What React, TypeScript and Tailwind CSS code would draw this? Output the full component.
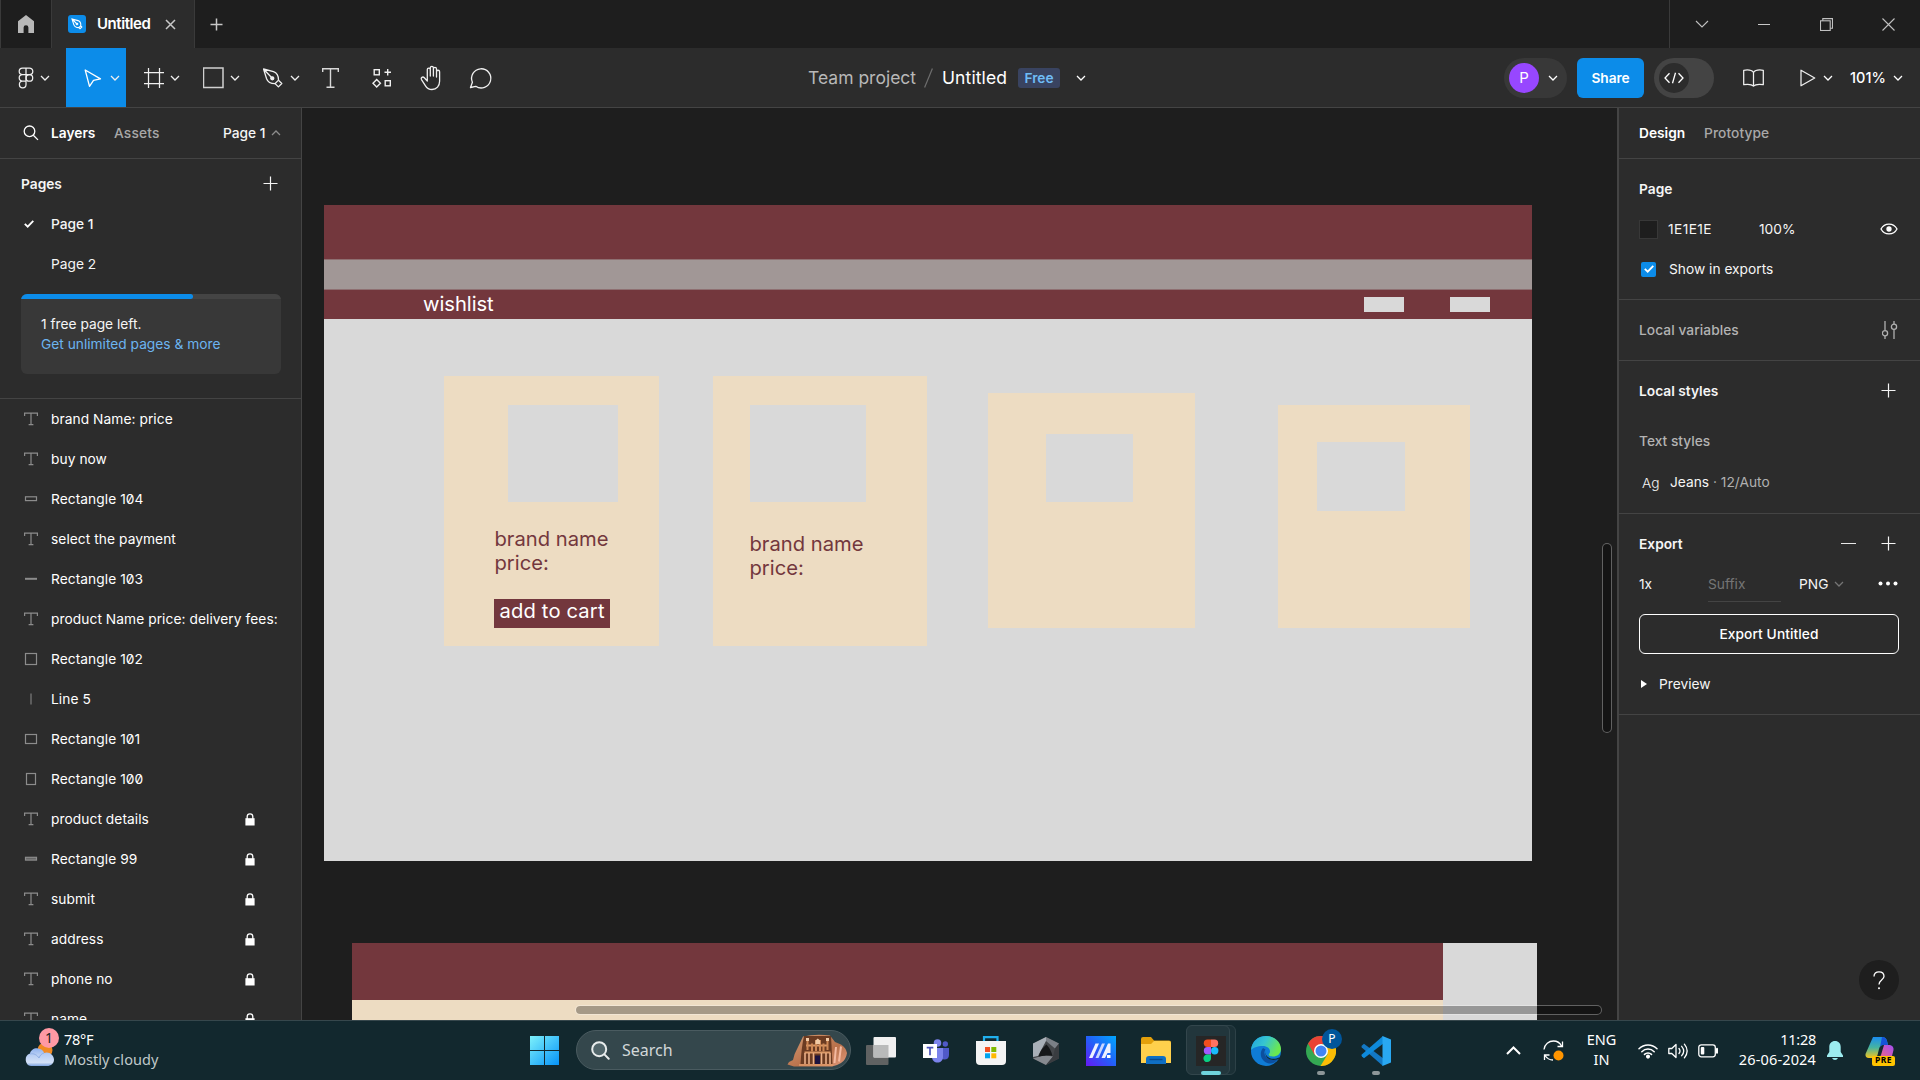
import type { ReactNode } from "react";

type LayerKind = "text" | "thin" | "dash" | "bar" | "rect" | "square" | "line" | "portrait";

const LAYERS: { name: string; kind: LayerKind; locked?: boolean }[] = [
  { name: "brand Name: price", kind: "text" },
  { name: "buy now", kind: "text" },
  { name: "Rectangle 104", kind: "thin" },
  { name: "select the payment", kind: "text" },
  { name: "Rectangle 103", kind: "dash" },
  { name: "product Name price: delivery fees:", kind: "text" },
  { name: "Rectangle 102", kind: "square" },
  { name: "Line 5", kind: "line" },
  { name: "Rectangle 101", kind: "rect" },
  { name: "Rectangle 100", kind: "portrait" },
  { name: "product details", kind: "text", locked: true },
  { name: "Rectangle 99", kind: "bar", locked: true },
  { name: "submit", kind: "text", locked: true },
  { name: "address", kind: "text", locked: true },
  { name: "phone no", kind: "text", locked: true },
  { name: "name", kind: "text", locked: true },
];

function Chevron({ className = "" }: { className?: string }) {
  return (
    <svg width="10" height="6" viewBox="0 0 10 6" className={"shrink-0 " + className} fill="none" stroke="currentColor" strokeWidth="1.25">
      <path d="M1 1l4 4 4-4" />
    </svg>
  );
}

function Plus() {
  return (
    <svg width="15" height="15" viewBox="0 0 15 15" className="-mt-px" fill="none" stroke="currentColor" strokeWidth="1.2">
      <path d="M7.5 0.5v14M0.5 7.5h14" />
    </svg>
  );
}

function LayerIcon({ kind }: { kind: LayerKind }) {
  return (
    <svg width="16" height="16" viewBox="0 0 16 16" fill="none" stroke="#8c8c8c" strokeWidth="1.2" className="shrink-0">
      {kind === "text" && <path d="M1.6 5V2.1h12.8V5M8 2.1v11.6M5.6 13.6h4.8" />}
      {kind === "thin" && <rect x="2.5" y="5.8" width="11" height="3.8" />}
      {kind === "dash" && <path d="M2 7.8h12" strokeWidth="2" />}
      {kind === "bar" && <rect x="2.5" y="6.3" width="11" height="2.8" fill="#666" />}
      {kind === "rect" && <rect x="2.5" y="3.5" width="11" height="9" />}
      {kind === "square" && <rect x="2.5" y="2.5" width="11" height="11" />}
      {kind === "portrait" && <rect x="3.5" y="2.5" width="9" height="11" />}
      {kind === "line" && <path d="M8 2.5v11" strokeWidth="1" />}
    </svg>
  );
}

function Lock() {
  return (
    <svg width="10" height="13" viewBox="0 0 10 13">
      <path d="M2.2 6V3.6a2.8 2.8 0 0 1 5.6 0V6" fill="none" stroke="#fff" strokeWidth="1.3" />
      <rect x="0.4" y="5.2" width="9.2" height="7.3" fill="#fff" />
    </svg>
  );
}

function TitleBar() {
  return (
    <div className="flex h-12 shrink-0 border-l border-[#3a3a3a] bg-[#1e1e1e]">
      <div className="flex w-[51px] items-center justify-center border-r border-[#3a3a3a]">
        <svg width="16" height="18" viewBox="0 0 16 18" fill="#b8b8b8">
          <path d="M8 0l8 6.2V18h-5.6v-5.4a2.4 2.4 0 0 0-4.8 0V18H0V6.2z" />
        </svg>
      </div>
      <div className="flex w-[143px] items-center border-r border-[#3a3a3a] bg-[#2c2c2c] pl-4">
        <div className="flex size-[18px] items-center justify-center rounded-[3px] bg-[#0c8ce9]">
          <svg width="12" height="12" viewBox="0 0 12 12" fill="none" stroke="#fff" strokeWidth="1.1">
            <path d="M1 1l6 1.6c2 .8 3 2.6 2.8 5L8 9.6c-2.6.1-4.4-1-5.2-3zM1 1l4.6 4.6M9.2 7.4l1.6 1.6-1.8 1.8-1.6-1.6" />
            <circle cx="6" cy="6" r=".8" />
          </svg>
        </div>
        <span className="ml-[11px] w-[68px] text-[15px] font-semibold tracking-[-0.45px] text-white">Untitled</span>
        <svg width="11" height="11" viewBox="0 0 11 11" stroke="#c8c8c8" strokeWidth="1.5">
          <path d="M1 1l9 9M10 1l-9 9" />
        </svg>
      </div>
      <div className="flex w-[43px] items-center justify-center text-[#c8c8c8]">
        <svg width="13" height="13" viewBox="0 0 13 13" stroke="currentColor" strokeWidth="1.5">
          <path d="M6.5.5v12M.5 6.5h12" />
        </svg>
      </div>
      <div className="ml-auto flex w-[251px] border-l border-[#3a3a3a] text-[#c0c0c0]">
        <div className="flex w-[63px] items-center justify-center">
          <svg width="14" height="8" viewBox="0 0 14 8" fill="none" stroke="currentColor" strokeWidth="1.1">
            <path d="M1 1l6 6 6-6" />
          </svg>
        </div>
        <div className="flex w-[62px] items-center justify-center">
          <div className="h-px w-3 bg-[#c8c8c8]" />
        </div>
        <div className="flex w-[63px] items-center justify-center">
          <svg width="13" height="13" viewBox="0 0 13 13" fill="none" stroke="currentColor" strokeWidth="1.1">
            <rect x=".5" y="2.8" width="9.7" height="9.7" />
            <path d="M2.8 2.8V.6h9.7v9.7h-2.3" />
          </svg>
        </div>
        <div className="flex w-[61px] items-center justify-center">
          <svg width="13" height="13" viewBox="0 0 13 13" stroke="currentColor" strokeWidth="1.1">
            <path d="M.5.5l12 12M12.5.5l-12 12" />
          </svg>
        </div>
      </div>
    </div>
  );
}

function Tool({ children, active, arrow }: { children: ReactNode; active?: boolean; arrow?: boolean }) {
  return (
    <div className={(active ? "bg-[#0c8ce9] " : "") + (arrow ? "w-[60px] justify-end pr-1.5 " : "w-[50px] justify-center ") + "flex items-center"}>
      {children}
      {arrow && <Chevron className="ml-[5px]" />}
    </div>
  );
}

function Toolbar() {
  return (
    <div className="flex h-[60px] shrink-0 items-stretch border-b border-[#444] bg-[#2c2c2c] text-white">
      <div className="flex w-[605px] text-[#f0f0f0]">
        <div className="flex w-[66px] items-center pl-[18px]">
          <svg width="16" height="22" viewBox="0 0 16 22" fill="none" stroke="currentColor" strokeWidth="1.25">
            <path d="M8 1H4.5a3.3 3.3 0 0 0 0 6.6H8zM8 1h3.5a3.3 3.3 0 0 1 0 6.6H8M8 7.6H4.5a3.3 3.3 0 0 0 0 6.6H8zM8 14.2H4.5A3.3 3.3 0 1 0 8 17.5z" />
            <circle cx="11.4" cy="10.9" r="3.3" />
          </svg>
          <Chevron className="ml-[6px]" />
        </div>
        <Tool active arrow>
          <svg width="21" height="22" viewBox="1.5 0 21 22" fill="none" stroke="#fff" strokeWidth="1.3" strokeLinejoin="round">
            <path d="M2 3l4.3 16.3 4-5.9 7-1.5z" transform="translate(.7 0)" />
          </svg>
        </Tool>
        <Tool arrow>
          <svg width="22" height="22" viewBox="0 0 22 22" fill="none" stroke="currentColor" strokeWidth="1.25">
            <path d="M5.5 1v20M16.5 1v20M1 5.5h20M1 16.5h20" />
          </svg>
        </Tool>
        <Tool arrow>
          <svg width="22" height="22" viewBox="0.5 0 22 22" fill="none" stroke="#d0d0d0" strokeWidth="1.5">
            <rect x="1" y="1" width="19.5" height="19.5" />
          </svg>
        </Tool>
        <Tool arrow>
          <svg width="22" height="22" viewBox="1 0 22 22" fill="none" stroke="currentColor" strokeWidth="1.3" strokeLinejoin="round">
            <path d="M1.5 2l10 2.7c3 1 5 4.2 5 8.4l-3.6 3.6c-4.2 0-7.2-1.9-8.3-5zM1.7 2.2l8.1 8.6" />
            <path d="M16.5 13.3l3.3 3.2-3.4 3.4-3.3-3.3" />
            <circle cx="10.3" cy="11.3" r="1.5" fill="currentColor" />
          </svg>
        </Tool>
        <Tool>
          <svg width="18" height="22" viewBox="0.5 0 18 22" fill="none" stroke="#d8d8d8" strokeWidth="1.4">
            <path d="M1.2 5V1.7h15.6V5M9 1.7v18.6M5 20.3h8" />
          </svg>
        </Tool>
        <Tool>
          <svg width="20" height="20" viewBox="-1 0 20 20" fill="none" stroke="currentColor" strokeWidth="1.4">
            <rect x="2.2" y="1.7" width="5.1" height="5.1" />
            <rect x="13.2" y="12.7" width="5.1" height="5.1" />
            <path d="M15.7 1v6.5M12.5 4.2H19M4.7 11.5l3.7 3.7-3.7 3.7L1 15.2z" />
          </svg>
        </Tool>
        <Tool>
          <svg width="24" height="26" viewBox="0.5 0 24 26" fill="none" stroke="currentColor" strokeWidth="1.3" strokeLinecap="round" strokeLinejoin="round">
            <path d="M7.3 13V4.6c0-2.1 3-2.1 3 0V11 3c0-2.2 3.1-2.2 3.1 0v8V3.9c0-2.1 3.1-2.1 3.1 0V12 6.8c0-2.1 3.1-2.1 3.1 0v9.5c0 4.7-3 8.2-7.6 8.2-3.2 0-5-1.2-6.5-3.7l-4-6.2c-1.1-1.9 1.3-3.5 2.8-1.9l3 3.3V12" transform="translate(1.5 0)" />
          </svg>
        </Tool>
        <Tool>
          <svg width="24" height="24" viewBox="0 0 24 24" fill="none" stroke="currentColor" strokeWidth="1.3" strokeLinejoin="round">
            <path d="M1.5 21.5l1.9-5.3A9.6 9.6 0 1 1 6.8 20.3z" />
          </svg>
        </Tool>
      </div>

      <div className="flex flex-1 items-center pl-[203px] text-[17.5px]">
        <span className="w-[116px] text-[#b8b8b8]">Team project</span>
        <svg width="9" height="20" viewBox="0 0 9 20" stroke="#6e6e6e" strokeWidth="1.2">
          <path d="M.6 19.5L8.4.5" />
        </svg>
        <span className="ml-[9px] w-[76px] tracking-[0.1px]">Untitled</span>
        <span className="flex h-5 w-[42px] items-center justify-center rounded-[3px] bg-[#394360] text-[13.75px] font-semibold text-[#6fbcf5]">Free</span>
        <Chevron className="ml-4" />
      </div>

      <div className="flex w-[416px] items-center">
        <div className="flex h-10 w-[63px] items-center rounded-full bg-[#383838] pl-[5px]">
          <span className="flex size-[30px] items-center justify-center rounded-full bg-[#9747ff] text-[15px]">P</span>
          <Chevron className="ml-[9px]" />
        </div>
        <div className="ml-2.5 flex h-10 w-[67px] items-center justify-center rounded-md bg-[#0c8ce9] text-[13.75px] font-semibold tracking-[-0.1px]">Share</div>
        <div className="ml-2.5 flex h-10 w-[60px] items-center rounded-full bg-[#444] pl-[5px]">
          <span className="flex size-[30px] items-center justify-center rounded-full bg-[#2c2c2c]">
            <svg width="20" height="12" viewBox="0 0 20 12" fill="none" stroke="#fff" strokeWidth="1.3">
              <path d="M5.5 1.2L1 6l4.5 4.8M14.5 1.2L19 6l-4.5 4.8M11.5.8l-3 10.4" />
            </svg>
          </span>
        </div>
        <svg className="ml-[29px] shrink-0" width="21" height="18" viewBox="0 0 21 18" fill="none" stroke="#f0f0f0" strokeWidth="1.25" strokeLinejoin="round">
          <path d="M10.5 3.5C9 1.3 5 .6 .7 1.3v14.4c4.3-.6 8.3-.2 9.8 1.5 1.5-1.7 5.5-2.1 9.8-1.5V1.3C16 .6 12 1.3 10.5 3.5zM10.5 3.5v13.7" />
        </svg>
        <svg className="ml-9 shrink-0" width="16" height="18" viewBox="0 0 16 18" fill="none" stroke="#f0f0f0" strokeWidth="1.25" strokeLinejoin="round">
          <path d="M1 1.2l13.7 7.8L1 16.8z" />
        </svg>
        <Chevron className="ml-[7px]" />
        <span className="ml-[17px] w-[43px] text-[14.5px] font-medium">101%</span>
        <Chevron />
      </div>
    </div>
  );
}

function LeftPanel() {
  return (
    <div className="flex w-[302px] shrink-0 flex-col overflow-hidden border-r border-[#444] bg-[#2c2c2c]">
      <div className="flex h-[51px] shrink-0 items-center border-b border-[#444] pl-[23px]">
        <svg width="16" height="16" viewBox="0 0 16 16" fill="none" stroke="#fff" strokeWidth="1.3">
          <circle cx="6.5" cy="6.3" r="5.3" />
          <path d="M10.3 10.2l4.7 4.7" />
        </svg>
        <span className="ml-3 w-[63px] font-semibold text-white">Layers</span>
        <span className="w-[109px] font-medium tracking-[0.15px] text-[#a8a8a8]">Assets</span>
        <span className="w-[48px] font-medium">Page 1</span>
        <Chevron className="rotate-180 text-[#8c8c8c]" />
      </div>
      <div className="flex h-[240px] shrink-0 flex-col border-b border-[#444] pt-[5px]">
        <div className="flex h-10 items-center justify-between pl-[21px] pr-[23px] font-semibold">
          Pages
          <Plus />
        </div>
        <div className="flex h-10 items-center pl-6 font-medium">
          <svg width="10" height="8" viewBox="0 0 10 8" fill="none" stroke="#fff" strokeWidth="1.8">
            <path d="M.8 3.8l2.9 2.9L9.3.9" />
          </svg>
          <span className="ml-[17px]">Page 1</span>
        </div>
        <div className="flex h-10 items-center pl-[51px]">Page 2</div>
        <div className="ml-[21px] mt-[10px] flex h-20 w-[260px] flex-col overflow-hidden rounded-md bg-[#383838]">
          <div className="h-[5px] bg-[#444]">
            <div className="h-full w-[172px] rounded-r-sm bg-[#0c8ce9]" />
          </div>
          <div className="px-5 pt-[15px] leading-5">
            <div>1 free page left.</div>
            <div className="text-[#6cb4f0]">Get unlimited pages &amp; more</div>
          </div>
        </div>
      </div>
      {LAYERS.map((l) => (
        <div key={l.name} className="flex h-10 shrink-0 items-center pl-[23px] pr-[46px]">
          <LayerIcon kind={l.kind} />
          <span className="ml-3 flex-1 whitespace-nowrap tracking-[0.06px] text-white [font-feature-settings:'zero']">{l.name}</span>
          {l.locked && <Lock />}
        </div>
      ))}
    </div>
  );
}

function RightPanel() {
  return (
    <div className="flex w-[303px] shrink-0 flex-col border-l-2 border-[#444] bg-[#2c2c2c]">
      <div className="flex h-[51px] items-center border-b border-[#444] pl-5">
        <span className="w-[65px] font-semibold text-white">Design</span>
        <span className="font-medium tracking-[0.08px] text-[#a8a8a8]">Prototype</span>
      </div>
      <div className="flex h-[141px] flex-col border-b border-[#444] pl-5 pr-[21px] pt-2.5">
        <div className="flex h-10 items-center font-semibold">Page</div>
        <div className="flex h-10 items-center">
          <span className="size-[19px] border border-[#383838] bg-[#1e1e1e]" />
          <span className="ml-[10px] w-[91px] tracking-[0.4px]">1E1E1E</span>
          <span className="w-[121px]">100%</span>
          <svg width="18" height="12" viewBox="0 0 18 12" fill="none" stroke="#fff" strokeWidth="1.3">
            <path d="M1 6c1.7-3.2 4.5-4.9 8-4.9S15.3 2.8 17 6c-1.7 3.2-4.5 4.9-8 4.9S2.7 9.2 1 6z" />
            <circle cx="9" cy="6" r="2" fill="#fff" />
          </svg>
        </div>
        <div className="flex h-10 items-center">
          <span className="ml-0.5 flex size-[15px] items-center justify-center rounded-[2px] bg-[#0c8ce9]">
            <svg width="10" height="8" viewBox="0 0 10 8" fill="none" stroke="#fff" strokeWidth="1.8">
              <path d="M.8 3.8l2.9 2.9L9.3.9" />
            </svg>
          </span>
          <span className="ml-[13px]">Show in exports</span>
        </div>
      </div>
      <div className="flex h-[61px] items-center justify-between border-b border-[#444] pl-5 pr-[22px] font-medium tracking-[0.06px] text-[#b3b3b3]">
        Local variables
        <svg width="16" height="18" viewBox="0 0 16 18" fill="none" stroke="#b0b0b0" strokeWidth="1.3">
          <path d="M3 0v9.5M3 15v3M12 0v3M12 8.5V18" />
          <circle cx="3" cy="12.2" r="2.6" />
          <circle cx="12" cy="5.8" r="2.6" />
        </svg>
      </div>
      <div className="flex h-[153px] flex-col border-b border-[#444] pl-5 pr-6 pt-2.5">
        <div className="flex h-10 items-center justify-between font-semibold">
          Local styles
          <Plus />
        </div>
        <div className="mt-2.5 flex h-10 items-center font-medium text-[#b3b3b3]">Text styles</div>
        <div className="mt-px flex h-10 items-center">
          <span className="ml-[3px] w-7 pt-px font-light">Ag</span>
          <span>
            Jeans <span className="text-[#b0b0b0]">· 12/Auto</span>
          </span>
        </div>
      </div>
      <div className="flex h-[201px] flex-col border-b border-[#444] px-5 pt-2.5">
        <div className="flex h-10 items-center pr-1 font-semibold">
          <span className="flex-1">Export</span>
          <span className="-mt-px mr-[25px] h-px w-[15px] bg-[#e8e8e8]" />
          <Plus />
        </div>
        <div className="flex h-10 items-center">
          <span className="w-[69px]">1x</span>
          <span className="flex h-9 w-[73px] items-center border-b border-[#444] text-[#757575]">Suffix</span>
          <span className="ml-[18px] w-[35px]">PNG</span>
          <Chevron className="text-[#757575]" />
          <svg className="-mt-px ml-[34px]" width="20" height="5" viewBox="0 0 20 5" fill="#fff">
            <circle cx="2.5" cy="2.5" r="2" />
            <circle cx="10" cy="2.5" r="2" />
            <circle cx="17.5" cy="2.5" r="2" />
          </svg>
        </div>
        <div className="mt-2.5 flex h-10 w-[260px] items-center justify-center rounded-md border border-white font-medium tracking-[0.08px] text-white">Export Untitled</div>
        <div className="mt-2.5 flex h-10 items-center">
          <svg className="ml-0.5" width="6" height="8" viewBox="0 0 6 8" fill="#fff">
            <path d="M0 0l6 4-6 4z" />
          </svg>
          <span className="ml-3">Preview</span>
        </div>
      </div>
      <div className="flex flex-1 items-end justify-end pb-5 pr-[21px]">
        <div className="flex size-10 items-center justify-center rounded-full bg-[#1e1e1e]">
          <svg width="12" height="19" viewBox="0 0 12 19" fill="none" stroke="#fff" strokeWidth="1.3">
            <path d="M1 5.5C1 2.5 3 .8 6 .8s5 1.7 5 4.5C11 9 6 9.3 6 13.5" />
            <circle cx="6" cy="17.3" r=".4" fill="#fff" />
          </svg>
        </div>
      </div>
    </div>
  );
}

/* Artboards sit at free positions on the canvas, relative to its top-left corner. */
function Canvas() {
  return (
    <div className="relative flex-1 overflow-hidden bg-[#1e1e1e] text-[20.2px] leading-6 text-[#73373d]">
      <div className="absolute left-[22px] top-[97px] h-[656px] w-[1208px] bg-[#d9d9d9]">
        <div className="h-[54px] bg-[#73373d]" />
        <div className="h-[31px] border-y border-[#8e6f71] bg-[#a19796]" />
        <div className="h-[29px] bg-[#73373d]" />
      </div>
      <span className="absolute left-[121px] top-[184px] tracking-[-0.05px] text-white">wishlist</span>
      <div className="absolute left-[1062px] top-[189px] h-[15px] w-10 bg-[#d9d9d9]" />
      <div className="absolute left-[1148px] top-[189px] h-[15px] w-10 bg-[#d9d9d9]" />

      <div className="absolute left-[142px] top-[268px] h-[270px] w-[215px] bg-[#eddcc2]" />
      <div className="absolute left-[206px] top-[297px] h-[97px] w-[110px] bg-[#d9d9d9]" />
      <div className="absolute left-[192.5px] top-[419px]">
        brand name
        <br />
        price:
      </div>
      <div className="absolute left-[192px] top-[491px] h-[29px] w-[116px] bg-[#73373d] pl-[5.5px] tracking-[0.15px] text-white">add to cart</div>

      <div className="absolute left-[411px] top-[268px] h-[270px] w-[214px] bg-[#eddcc2]" />
      <div className="absolute left-[448px] top-[297px] h-[97px] w-[116px] bg-[#d9d9d9]" />
      <div className="absolute left-[447.5px] top-[424px]">
        brand name
        <br />
        price:
      </div>

      <div className="absolute left-[686px] top-[285px] h-[235px] w-[207px] bg-[#eddcc2]" />
      <div className="absolute left-[744px] top-[326px] h-[68px] w-[87px] bg-[#d9d9d9]" />

      <div className="absolute left-[976px] top-[297px] h-[223px] w-[192px] bg-[#eddcc2]" />
      <div className="absolute left-[1015px] top-[334px] h-[69px] w-[88px] bg-[#d9d9d9]" />

      <div className="absolute left-[50px] top-[835px] h-[77px] w-[1185px] bg-[#d9d9d9]">
        <div className="h-[57px] w-[1091px] bg-[#73373d]" />
        <div className="h-5 w-[1091px] bg-[#eddcc2]" />
      </div>

      <div className="absolute left-[1300px] top-[435px] h-[190px] w-[10px] rounded-full border border-white/30 bg-black/30 bg-clip-padding" />
      <div className="absolute left-[273px] top-[897px] h-[10px] w-[1027px] rounded-full border border-white/30 bg-black/30 bg-clip-padding" />
    </div>
  );
}

function TaskApp({ children }: { children: ReactNode }) {
  return <div className="relative flex h-full w-[55px] shrink-0 items-center justify-center">{children}</div>;
}

function RunDot() {
  return <span className="absolute bottom-[5px] left-1/2 h-1 w-2 -translate-x-1/2 rounded-full bg-[#8d9698]" />;
}

function Taskbar() {
  return (
    <div className="flex h-[60px] shrink-0 items-center border-t border-[#36474c] bg-[#12282e] font-['Noto_Sans',sans-serif] text-[14.5px] text-white">
      <div className="flex w-[530px] items-center pl-[23px]">
        <div className="relative h-[38px] w-8">
          <svg width="32" height="38" viewBox="0 0 32 38" className="-mt-px">
            <defs>
              <linearGradient id="cloud" x1="0" y1="0" x2="0" y2="1">
                <stop offset="0" stopColor="#8fb2ee" />
                <stop offset=".35" stopColor="#b6cdf4" />
                <stop offset=".8" stopColor="#d3e1f7" />
                <stop offset="1" stopColor="#7da3e0" />
              </linearGradient>
            </defs>
            <circle cx="22" cy="19" r="7.5" fill="#f08a24" />
            <path d="M8 35a6.5 6.5 0 0 1-1-12.5C8 18 13 16 17 18c2 .5 3.500 2 4 4 5-2 10 2 10 6.500 0 4-3 6.500-7 6.500z" fill="url(#cloud)" />
            <path d="M7 23c4-1 7 1 9 4 1-3 3-4.500 5-5" fill="none" stroke="#8fb0e6" strokeWidth="1" />
          </svg>
          <span className="absolute left-4 top-[-4px] flex size-5 items-center justify-center rounded-full bg-[#ff99a4] text-[14px] leading-none text-[#222]">1</span>
        </div>
        <div className="-mt-1 ml-[9px] leading-5">
          <div className="tracking-[-0.3px]">78°F</div>
          <div className="tracking-[0.05px] text-[#c0c8ca]">Mostly cloudy</div>
        </div>
      </div>

      <svg width="29" height="29" viewBox="0 0 29 29" className="shrink-0">
        <defs>
          <linearGradient id="win" x1="0" y1="0" x2="1" y2="1">
            <stop offset="0" stopColor="#7df1fb" />
            <stop offset="1" stopColor="#0693f8" />
          </linearGradient>
        </defs>
        <path d="M0 0h14v14H0zM15 0h14v14H15zM0 15h14v14H0zM15 15h14v14H15z" fill="url(#win)" />
      </svg>

      <div className="-mt-px ml-[17px] flex h-10 w-[275px] shrink-0 items-center rounded-full border border-[#4a5b60] bg-[#34474c] pl-[14px] pr-[3px]">
        <svg width="19" height="19" viewBox="0 0 19 19" fill="none" stroke="#e8ecec" strokeWidth="2" strokeLinecap="round">
          <circle cx="8.2" cy="8.2" r="7" fill="#51656a" />
          <path d="M13.4 13.4l4.3 4.3" />
        </svg>
        <span className="ml-3 flex-1 text-[16px] text-[#d2d8d9]">Search</span>
        <svg width="60" height="33" viewBox="0 0 60 33">
          <defs>
            <linearGradient id="rock" x1="0" y1="0" x2="1" y2="1">
              <stop offset="0" stopColor="#d39a72" />
              <stop offset=".6" stopColor="#b9714b" />
              <stop offset="1" stopColor="#e39a7c" />
            </linearGradient>
          </defs>
          <path d="M16 2.5Q29-.5 43 1.5l5 6.5 6 2.5q5 3 6 8.5-1 7-6 10-5 3-9 3.5H7L.5 30.5 2 28l4-2q1-6 5-13 2-4 5-10.5z" fill="url(#rock)" />
          <path d="M17 2h27l1.5 28H13.5q1-17 3.5-28z" fill="#6b3b22" />
          <path d="M19 11.5h22M17.5 18.5h26" stroke="#dc9a68" strokeWidth="2.2" />
          <path d="M20.5 5v11M25 9.5v8M29 6v11M33 6v11M36.5 9.5v8M40.5 5v11" stroke="#cf8855" strokeWidth="2" />
          <path d="M18 19v11M22 19v11M26.5 19v11M34.5 19v11M39 19v11M43 19v11" stroke="#eab089" strokeWidth="1.6" />
          <rect x="28" y="21.5" width="5" height="8.5" fill="#1d1440" />
          <path d="M19 4h3v3h-3zM39 4h3v3h-3zM28.5 6.5l2.3-2 2.3 2V10h-4.6z" fill="#f2cba6" />
          <path d="M49 13l-1.5 16M54 12.5l-2 15" stroke="#f4b9a0" strokeWidth="2" />
          <path d="M12 31h34" stroke="#e09a68" strokeWidth="1.5" />
        </svg>
      </div>

      <div className="ml-[2px] flex h-full">
        <TaskApp>
          <svg width="30" height="28" viewBox="0 0 30 28">
            <rect x="0" y="8" width="22.5" height="20" rx="1" fill="#606262" />
            <rect x="7.5" y="0" width="22.5" height="20.5" rx="1" fill="#f0f0f0" />
            <rect x="7.5" y="8" width="15" height="12.5" fill="#b9baba" />
          </svg>
        </TaskApp>
        <TaskApp>
          <svg width="26" height="24" viewBox="0 0 26 24">
            <circle cx="22.3" cy="5" r="2.7" fill="#5059c9" />
            <path d="M17 9h9v7c0 3-2 4.5-4.5 4.5S17 19 17 16z" fill="#5059c9" />
            <circle cx="14.5" cy="4" r="3.8" fill="#7b83eb" />
            <path d="M9 9h11v9c0 3.5-2.5 5.5-5.5 5.5S9 21.5 9 18z" fill="#7b83eb" />
            <rect x="0" y="5" width="14" height="14" fill="#fff" />
            <path d="M3.7 8.7h6.6M7 8.7v7.6" stroke="#4b53bc" strokeWidth="1.7" />
          </svg>
        </TaskApp>
        <TaskApp>
          <svg width="30" height="30" viewBox="0 0 30 30">
            <path d="M8 6V1.2h13.5V6" fill="none" stroke="#20b0ee" strokeWidth="2.2" />
            <path d="M0 5h30v20q0 4-4 4H4q-4 0-4-4z" fill="#f4f4f4" />
            <path d="M9 11h5v5H9z" fill="#f25022" />
            <path d="M15.3 11h5v5h-5z" fill="#7fba00" />
            <path d="M9 17.3h5v5H9z" fill="#00a4ef" />
            <path d="M15.3 17.3h5v5h-5z" fill="#ffb900" />
          </svg>
        </TaskApp>
        <TaskApp>
          <svg width="26" height="28" viewBox="0 0 26 28">
            <path d="M13 0l13 6.5v15L13 28 0 21.5v-15z" fill="#44474b" />
            <path d="M13 0l13 6.5-4 5L13 4z" fill="#7b8087" />
            <path d="M13 0L0 6.5V20l5-1 8-15z" fill="#a9b0b8" />
            <path d="M13.5 7.5c3 3 5 7 6 11.5-5-1-10 0-14 2.5C6 16 9 11 13.5 7.5z" fill="#16181a" />
            <path d="M13 28L0 21.5 5 20q7-2 15-.5z" fill="#85898f" />
            <path d="M26 6.5v15L13 28l7-8.5 2-8z" fill="#393c40" />
          </svg>
        </TaskApp>
        <TaskApp>
          <svg width="30" height="30" viewBox="0 0 30 30">
            <defs>
              <linearGradient id="ma" x1="0" y1="1" x2="1" y2="0">
                <stop offset="0" stopColor="#6618f5" />
                <stop offset=".5" stopColor="#2360f8" />
                <stop offset="1" stopColor="#00a8ff" />
              </linearGradient>
            </defs>
            <rect width="30" height="30" fill="url(#ma)" />
            <path d="M3 22L9.5 7.5H13L6.5 22z" fill="#eef1ff" />
            <path d="M9.5 22L16 7.5h3L12.5 22z" fill="#c9d6ff" />
            <path d="M15.5 22L22 7.5h2.5V17h-3L19 22z" fill="#eef1ff" />
            <path d="M21 19h3.5v3H21z" fill="#fff" />
          </svg>
        </TaskApp>
        <TaskApp>
          <svg width="30" height="27" viewBox="0 0 30 27">
            <path d="M0 2Q0 0 2 0h8l3 3.5H28q2 0 2 2V8H0z" fill="#e3a00b" />
            <path d="M0 7h10l3-3h15q2 0 2 2v20H0z" fill="#ffd04c" />
            <path d="M5 27v-5q0-3 3-3h14q3 0 3 3v5z" fill="#0f6fc4" />
            <path d="M8.5 22.5h13" stroke="#0a4a8e" strokeWidth="1.4" />
          </svg>
        </TaskApp>
        <TaskApp>
          <span className="absolute left-[5px] top-[4px] h-[50px] w-[48px] rounded-md border border-[#2d4147] bg-[#1b3036]" />
          <span className="absolute left-[3px] top-[4px] h-[50px] w-[44px] rounded-md border border-[#33464c] bg-[#22363c]" />
          <span className="relative flex size-[30px] items-center justify-center bg-[#262626]">
            <svg width="16" height="24" viewBox="0 0 16 24">
              <path d="M8 .5H4.5a3.7 3.7 0 0 0 0 7.4H8z" fill="#f24e1e" />
              <path d="M8 .5h3.5a3.7 3.7 0 0 1 0 7.4H8z" fill="#ff7262" />
              <path d="M8 8H4.5a3.7 3.7 0 0 0 0 7.4H8z" fill="#a259ff" />
              <circle cx="11.7" cy="11.7" r="3.7" fill="#1abcfe" />
              <path d="M8 15.5H4.5A3.8 3.8 0 1 0 8 19.2z" fill="#0acf83" />
            </svg>
          </span>
          <span className="absolute bottom-[5px] left-[18px] h-1 w-5 rounded-full bg-[#6fd3dc]" />
        </TaskApp>
        <TaskApp>
          <svg width="30" height="30" viewBox="0 0 30 30">
            <defs>
              <linearGradient id="edgeTop" x1="0" y1="0" x2="1" y2=".4">
                <stop offset="0" stopColor="#1ea0e0" />
                <stop offset=".5" stopColor="#36c5d0" />
                <stop offset="1" stopColor="#6be84f" />
              </linearGradient>
            </defs>
            <circle cx="15" cy="15" r="15" fill="#0f7cd6" />
            <path d="M0 14C1 5 7 0 15 0c9 0 15 6.5 15 13 0 5-4 7.5-8 7.5-3 0-5-1.2-4-2.5 3-4-1-8-6-8-6 0-10 2-12 4z" fill="url(#edgeTop)" />
            <path d="M12 12c-5 6-1 14 6 15.5 4 .5 7-1.5 9.5-5C25 24 21 24.5 18 23c-4-2-6-6-3.5-9.5z" fill="#0c4f9e" />
            <path d="M15.5 13.5c-2 4-.5 7 3 8.5 3 1.2 7 .8 9.5-.5q1.5-.5.5 1-2 1-6 1.5c-6 0-10-5-7-10.5z" fill="#12282e" />
          </svg>
        </TaskApp>
        <TaskApp>
          <svg width="30" height="30" viewBox="0 0 30 30">
            <circle cx="15" cy="15" r="15" fill="#34a853" />
            <path d="M2 7.5A15 15 0 0 1 28 7.5L15 8l-6.3 11z" fill="#ea4335" />
            <path d="M28 7.5A15 15 0 0 1 14.5 30l7-11.5L20 8z" fill="#fbbc05" />
            <circle cx="15" cy="15" r="7" fill="#fff" />
            <circle cx="15" cy="15" r="5.5" fill="#4285f4" />
          </svg>
          <span className="absolute left-[29px] top-[8px] flex size-5 items-center justify-center rounded-full bg-[#00559b] text-[12px] leading-none">P</span>
          <RunDot />
        </TaskApp>
        <TaskApp>
          <svg width="30" height="30" viewBox="0 0 30 30">
            <path d="M1 9.5l2-1.7 19 14.5V30L.8 11.5q-.8-1 .2-2z" fill="#1378c4" />
            <path d="M1 20.5l2 1.7 19-14.5V0L.8 18.5q-.8 1 .2 2z" fill="#0e8adb" />
            <path d="M21.5 0L30 3.5v23L21.5 30z" fill="#29a8f2" />
          </svg>
          <RunDot />
        </TaskApp>
      </div>

      <div className="ml-auto flex h-full items-center">
        <svg width="15" height="9" viewBox="0 0 15 9" className="-mt-px" fill="none" stroke="#fff" strokeWidth="2">
          <path d="M1 8l6.5-6.5L14 8" />
        </svg>
        <svg className="ml-[22px]" width="21" height="21" viewBox="0 0 21 21" fill="none" stroke="#fff" strokeWidth="1.3">
          <path d="M1 9.5C1.5 4 6 1 10.5 1c3.5 0 6.5 2 8 5M19.5 1.5V6.5h-5M1.5 20v-5h5M2 15.5c2 3 4.5 4.5 8 4.5" />
          <circle cx="15.5" cy="15.5" r="5" fill="#ff9500" stroke="none" />
        </svg>
        <div className="-mt-[3px] ml-[18px] w-[39px] text-center leading-5">
          ENG
          <br />
          IN
        </div>
        <svg className="ml-[17px]" width="20" height="16" viewBox="0 0 20 16" fill="none" stroke="#fff" strokeWidth="1.5" strokeLinecap="round">
          <path d="M1 5.8c5-5 13-5 18 0M3.8 8.7c3.5-3.5 8.9-3.5 12.4 0M6.5 11.4c2-2 5-2 7 0" />
          <circle cx="10" cy="13.6" r="1.3" fill="#fff" />
        </svg>
        <svg className="ml-[10px]" width="20" height="16" viewBox="0 0 20 16" fill="none" stroke="#fff" strokeWidth="1.3" strokeLinecap="round" strokeLinejoin="round">
          <path d="M.8 5.5h3L8 1.5v13l-4.2-4h-3zM11 5.5q2 2.5 0 5M13.7 3.3q4 4.7 0 9.4M16.4 1.2q5.5 6.8 0 13.6" />
        </svg>
        <svg className="ml-[10px]" width="21" height="14" viewBox="0 0 21 14" fill="none" stroke="#fff" strokeWidth="1.3">
          <rect x=".8" y=".8" width="16.5" height="12" rx="2.5" />
          <path d="M19 4.8v4" strokeWidth="2" strokeLinecap="round" />
          <rect x="2.8" y="3" width="3.5" height="7.6" rx="1" fill="#fff" stroke="none" />
        </svg>
        <div className="-mt-1 w-[97px] whitespace-nowrap text-right leading-5">
          <div className="tracking-[-0.25px]">11:28</div>
          <div className="tracking-[0.15px]">26-06-2024</div>
        </div>
        <svg className="ml-[11px]" width="16" height="19" viewBox="0 0 16 19" fill="#9cecef">
          <path d="M8 0C4.5 0 2.3 2.5 2.3 6v5L0 14.5V16h16v-1.5L13.7 11V6C13.7 2.5 11.5 0 8 0zM5 17q1 2 3 2t3-2z" />
        </svg>
        <div className="relative ml-[22px] mr-[26px] mt-px h-[29px] w-[29px]">
          <svg width="29" height="22" viewBox="0 0 29 22">
            <defs>
              <linearGradient id="pilotLeft" x1="0" y1="0" x2="0" y2="1">
                <stop offset="0" stopColor="#1a8df0" />
                <stop offset=".5" stopColor="#46b4a0" />
                <stop offset="1" stopColor="#f5c51b" />
              </linearGradient>
              <linearGradient id="pilotRight" x1="1" y1="0" x2="0" y2="1">
                <stop offset="0" stopColor="#a24df5" />
                <stop offset="1" stopColor="#fb6a73" />
              </linearGradient>
            </defs>
            <path d="M8 0h9q4 0 5 4l1 4h-5q-3 0-4 4l-1.5 6q-1 3-4 3H4q-4 0-3.5-4z" fill="url(#pilotLeft)" />
            <path d="M17 0q4 0 5 4l1 4h-5q-2 0-3 2z" fill="#1453d8" />
            <path d="M19 8h6q4 1 3.5 5L27 19q-1 3-4 3H12q3-1 4-4z" fill="url(#pilotRight)" />
          </svg>
          <span className="absolute bottom-0 left-[7px] flex h-[10px] w-[23px] items-center justify-center rounded-[2px] bg-[#ffc400] text-[8.5px] font-bold leading-none tracking-[0.5px] text-black">PRE</span>
        </div>
      </div>
    </div>
  );
}

export default function App() {
  return (
    <div className="flex h-[1080px] w-[1920px] flex-col overflow-hidden bg-[#1e1e1e] font-[Inter,sans-serif] text-[13.75px] leading-5 text-[#f5f5f5]">
      <TitleBar />
      <Toolbar />
      <div className="flex h-[912px]">
        <LeftPanel />
        <Canvas />
        <RightPanel />
      </div>
      <Taskbar />
    </div>
  );
}
